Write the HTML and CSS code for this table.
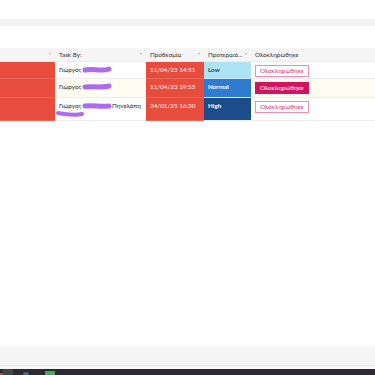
FILE: index.html
```html
<!DOCTYPE html>
<html>
<head>
<meta charset="utf-8">
<link rel="stylesheet" href="styles.css">
</head>
<body>
<div class="page">
  <div class="top-gap"></div>
  <div class="band"></div>
  <div class="mid-gap"></div>
  <table class="grid">
    <colgroup>
      <col class="c1"><col class="c2"><col class="c3"><col class="c4"><col class="c5">
    </colgroup>
    <thead>
      <tr>
        <th><span class="sort">▾</span></th>
        <th>Task By:<span class="sort">▾</span></th>
        <th>Προθεσμία<span class="sort">▾</span></th>
        <th>Προτεραιό...<span class="sort">▾</span></th>
        <th>Ολοκληρώθηκε</th>
      </tr>
    </thead>
    <tbody>
      <tr class="r1">
        <td class="red"></td>
        <td class="who">Γιώργος <span class="scrib"><svg width="30" height="8" viewBox="0 0 30 8"><path d="M3 4 C10 2 20 6 27 3" stroke="#b06af2" stroke-width="5" stroke-linecap="round" fill="none"/></svg></span></td>
        <td class="red date">11/04/23 14:51</td>
        <td class="low prio">Low</td>
        <td><span class="btn">Ολοκληρώθηκε</span></td>
      </tr>
      <tr class="r2">
        <td class="red"></td>
        <td class="who">Γιώργος <span class="scrib"><svg width="30" height="8" viewBox="0 0 30 8"><path d="M3 4 C10 3 20 5 27 3" stroke="#b06af2" stroke-width="5" stroke-linecap="round" fill="none"/></svg></span></td>
        <td class="red date">11/04/23 19:55</td>
        <td class="normal prio">Normal</td>
        <td><span class="btn filled">Ολοκληρώθηκε</span></td>
      </tr>
      <tr class="r3">
        <td class="red"></td>
        <td class="who">Γιώργος <span class="scrib"><svg width="30" height="8" viewBox="0 0 30 8"><path d="M3 4 C10 3 20 5 27 4" stroke="#b06af2" stroke-width="5" stroke-linecap="round" fill="none"/></svg></span>Πηνελόπη<br><span class="scrib2"><svg width="30" height="8" viewBox="0 0 30 8"><path d="M3 3 C10 4 20 6 27 4" stroke="#b06af2" stroke-width="4" stroke-linecap="round" fill="none"/></svg></span></td>
        <td class="red date">24/01/25 16:30</td>
        <td class="high prio">High</td>
        <td><span class="btn">Ολοκληρώθηκε</span></td>
      </tr>
    </tbody>
  </table>
  <div class="spacer"></div>
  <div class="footer"></div>
  <div class="foot-gap"></div>
  <div class="taskbar">
    <span class="tb-red"></span>
    <span class="tb-start"></span>
    <span class="tb-blue"></span>
    <span class="tb-green"></span>
  </div>
</div>
</body>
</html>
```

FILE: styles.css
```css
html, body {
  margin: 0;
  padding: 0;
  background: #ffffff;
}
.page {
  width: 375px;
  height: 375px;
  display: flex;
  flex-direction: column;
  overflow: hidden;
  font-family: Lato, "Noto Sans", sans-serif;
  font-size: 6.3px;
  color: #222;
}
.top-gap { height: 19px; flex: none; }
.band { height: 7px; background: #f2f2f2; flex: none; }
.mid-gap { height: 22px; flex: none; }
.grid {
  border-collapse: collapse;
  table-layout: fixed;
  width: 375px;
  flex: none;
}
.c1 { width: 55px; }
.c2 { width: 91px; }
.c3 { width: 58px; }
.c4 { width: 47px; }
.c5 { width: 124px; }
.grid th {
  background: #f5f5f5;
  height: 13px;
  padding: 0 4px;
  text-align: left;
  font-weight: 400;
  color: #333;
  position: relative;
  white-space: nowrap;
  border-bottom: 1px solid #ececec;
}
.sort {
  position: absolute;
  right: 4px;
  top: 3px;
  color: #f3a0b0;
  font-size: 4px;
}
.grid td {
  padding: 3px 4px 0;
  vertical-align: top;
  border-bottom: 1px solid #ececec;
  white-space: nowrap;
  line-height: 9px;
}
.r1 td { height: 13px; }
.r2 td { height: 15px; }
.r2 { background: #fffdf2; }
.r3 td { height: 18px; }
.grid td.red {
  background: #e74c3c;
  border-bottom-color: #e9685b;
}
.date { color: #fff; }
.prio { font-weight: 700; }
.low { background: #ade3f5; color: #2a4a5a; border-bottom-color: #c5ecf8 !important; }
.grid td.normal { background: #2f7bd0; color: #fff; }
.grid td.high { background: #1d4c8b; color: #fff; }
.who { color: #222; }
.scrib { display: inline-block; vertical-align: middle; margin-left: -1px; height: 8px; line-height: 0; }
.scrib2 { display: inline-block; margin-left: -4px; margin-top: 0; height: 8px; line-height: 0; }
.btn {
  display: inline-block;
  border: 1px solid #ec8fb2;
  color: #d8307a;
  padding: 1px 4px;
  line-height: 8px;
  background: #fff;
}
.btn.filled {
  background: #d2145f;
  border-color: #d2145f;
  color: #fff;
}
.spacer { flex: 1; }
.footer {
  height: 19px;
  background: #f5f5f5;
  border-bottom: 1px solid #e8e8e8;
  flex: none;
}
.foot-gap { height: 3px; background: #f7f7f7; flex: none; }
.taskbar {
  height: 6px;
  flex: none;
  background: #2c2a30;
  display: flex;
  align-items: flex-end;
  position: relative;
}
.tb-red { width: 3px; height: 2px; background: #d33; }
.tb-start { width: 10px; height: 6px; background: #454348; }
.tb-blue { width: 6px; height: 3px; background: #4a6a90; margin-left: 10px; border-radius: 3px 3px 0 0; }
.tb-green { width: 10px; height: 4px; background: #3bb34a; margin-left: 16px; }
```
